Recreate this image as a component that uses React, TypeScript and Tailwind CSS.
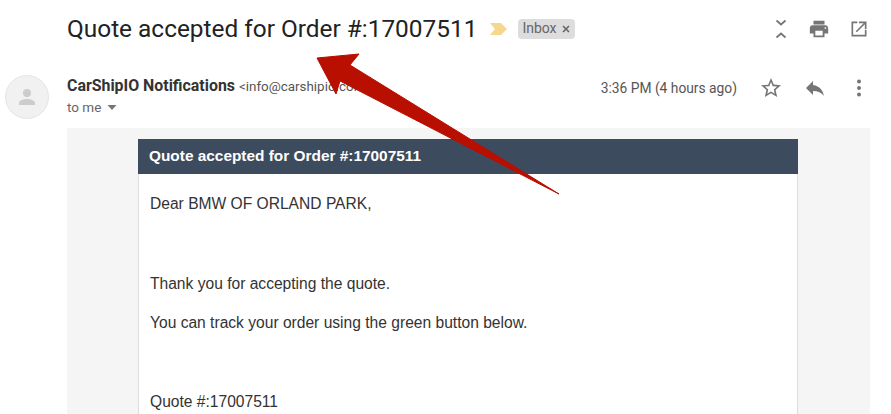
export default function App() {
  return (
    <div className="relative h-[414px] w-[891px] overflow-hidden bg-white font-['Roboto',sans-serif]">
      <div className="flex h-[57px] items-center pl-[67px] pr-[22px]">
        <h1 className="text-[24.4px] leading-[32px] font-normal text-[#222222] whitespace-nowrap">Quote accepted for Order #:17007511</h1>
        <svg className="ml-[13px] mt-[1px] h-[14px] w-[18px]" viewBox="0 0 18 14"><path d="M0 1h11l6 6-6 6H0l5-6z" fill="#f5d78e" /></svg>
        <span className="ml-[10px] flex h-[20px] items-center rounded-[4px] bg-[#dddddd] pl-[4px] pr-[5px] text-[14px] text-[#666666]">
          Inbox
          <svg className="ml-[5px] h-[8px] w-[8px]" viewBox="0 0 8 8"><path d="M1 1l6 6M7 1L1 7" stroke="#666666" strokeWidth="1.6" /></svg>
        </span>
        <div className="ml-auto flex items-center">
          <svg className="h-[20px] w-[20px]" viewBox="0 0 20 20" fill="none" stroke="#757575" strokeWidth="1.7"><path d="M5.500 1.500l4.500 4 4.500-4M5.500 18.500l4.500-4 4.500 4" /></svg>
          <svg className="ml-[17px] h-[22px] w-[22px]" viewBox="0 0 24 24" fill="#757575"><path d="M19 8H5c-1.66 0-3 1.34-3 3v6h4v4h12v-4h4v-6c0-1.66-1.34-3-3-3zm-3 11H8v-5h8v5zm3-7c-.55 0-1-.45-1-1s.45-1 1-1 1 .45 1 1-.45 1-1 1zm-1-9H6v4h12V3z" /></svg>
          <svg className="ml-[19px] h-[20px] w-[20px]" viewBox="0 0 24 24" fill="#757575"><path d="M20 3h-8v2h5.600L8 14.600 9.400 16 19 6.400V12h2V3zM19 19H5V5h5V3H3v18h18v-8h-2z" /></svg>
        </div>
      </div>

      <div className="flex h-[71px] items-start pr-[20px]">
        <div className="ml-[5px] mt-[18px] flex h-[44px] w-[44px] items-center justify-center rounded-full border border-[#e5e5e5] bg-[#f1f1f1]">
          <svg className="h-[24px] w-[24px]" viewBox="0 0 24 24" fill="#cccccc"><circle cx="12" cy="8" r="4" /><path d="M4 20v-2c0-2.700 5.300-4 8-4s8 1.300 8 4v2z" /></svg>
        </div>
        <div className="ml-[18px] mt-[19px] flex flex-col">
          <div className="flex items-baseline whitespace-nowrap">
            <span className="text-[15.900px] leading-[20px] font-bold text-[#333333]">CarShipIO Notifications</span>
            <span className="ml-[4px] text-[13.400px] leading-[20px] text-[#555555]">&lt;info@carshipio.com&gt;</span>
          </div>
          <div className="mt-[2px] flex items-center text-[13.500px] leading-[16px] text-[#666666]">
            to me
            <svg className="ml-[6px] h-[5px] w-[10px]" viewBox="0 0 9 5"><path d="M0 0h9L4.500 5z" fill="#777777" /></svg>
          </div>
        </div>
        <div className="ml-auto mt-[19px] flex items-center">
          <span className="text-[13.800px] leading-[20px] text-[#555555] whitespace-nowrap">3:36 PM (4 hours ago)</span>
          <div className="ml-[22px] flex items-center gap-[20px]">
            <svg className="h-[24px] w-[24px]" viewBox="0 0 24 24" fill="#757575"><path d="M22 9.240l-7.190-.62L12 2 9.190 8.630 2 9.240l5.460 4.730L5.820 21 12 17.270 18.180 21l-1.630-7.030L22 9.240zM12 15.400l-3.760 2.270 1-4.280-3.320-2.880 4.380-.38L12 6.100l1.710 4.040 4.380.38-3.320 2.880 1 4.280L12 15.400z" /></svg>
            <svg className="h-[24px] w-[24px]" viewBox="0 0 24 24" fill="#757575"><path d="M10 9V5l-7 7 7 7v-4.100c5 0 8.500 1.600 11 5.100-1-5-4-10-11-11z" /></svg>
            <svg className="h-[24px] w-[24px]" viewBox="0 0 24 24" fill="#757575"><circle cx="12" cy="5.500" r="2" /><circle cx="12" cy="12" r="2" /><circle cx="12" cy="18.500" r="2" /></svg>
          </div>
        </div>
      </div>

      <div className="ml-[67px] mr-[21px] h-[286px] bg-[#f5f5f5] pl-[71px] pr-[72px] pt-[11px] font-['Liberation_Sans',sans-serif]">
        <div className="h-full border-x border-[#dddddd] bg-white">
          <div className="-mx-px flex h-[35px] items-center bg-[#3d4b5e] pb-[2px] pl-[11px] text-[15.400px] font-bold text-white">Quote accepted for Order #:17007511</div>
          <div className="pl-[11px] text-[15.600px] leading-[20px] text-[#333333]">
            <p className="mt-[20px]">Dear BMW OF ORLAND PARK,</p>
            <p className="mt-[60px]">Thank you for accepting the quote.</p>
            <p className="mt-[19px]">You can track your order using the green button below.</p>
            <p className="mt-[59px]">Quote #:17007511</p>
          </div>
        </div>
      </div>

      <svg className="absolute left-0 top-0 h-[414px] w-[891px]" viewBox="0 0 891 414">
        <path d="M317 58L359 54L350 65L559 194L340 81L336 94Z" fill="#b80f00" stroke="#b80f00" strokeWidth="1" strokeLinejoin="round" />
      </svg>
    </div>
  );
}
